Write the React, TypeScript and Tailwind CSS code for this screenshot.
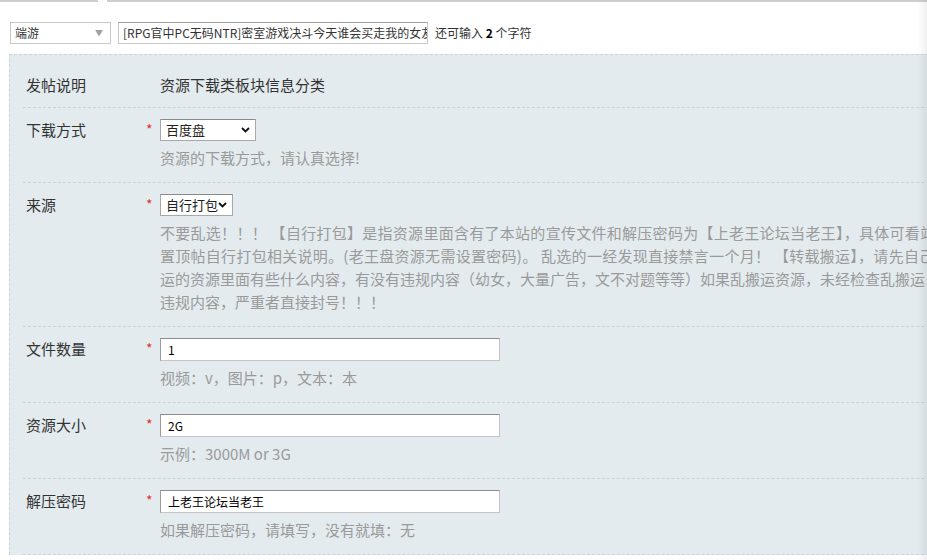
import React from "react";

const FONT = { fontFamily: '"Microsoft YaHei", "Noto Sans CJK SC", "Noto Sans", sans-serif' };

function Chevron() {
  return (
    <svg width="9" height="6" viewBox="0 0 9 6" className="shrink-0">
      <path d="M1 1 L4.5 4.5 L8 1" fill="none" stroke="#111" strokeWidth="1.8" />
    </svg>
  );
}

function FakeSelect({ value, width }: { value: string; width: string }) {
  return (
    <div
      className={`${width} h-[22px] bg-white border border-[#a8a8a8] border-t-[#8a8a8a] flex items-center justify-between pl-[5px] pr-[5px] text-[13px] text-[#222]`}
    >
      <span>{value}</span>
      <Chevron />
    </div>
  );
}

function TextInput({ value }: { value: string }) {
  return (
    <div className="w-[340px] h-[23px] bg-white border border-[#c4c4c4] border-t-[#8c8c8c] border-l-[#9a9a9a] flex items-center pl-[7px] text-[12px] text-black">
      {value}
    </div>
  );
}

function Row({
  label,
  children,
  hint,
  required = true,
}: {
  label: string;
  children: React.ReactNode;
  hint?: React.ReactNode;
  required?: boolean;
}) {
  return (
    <div className="flex border-b border-dashed border-[#c9d3d8] pt-[11px] pb-[13px]">
      <div className="w-[123px] pl-[3px] h-[22px] leading-[22px] text-[15px] text-[#333] shrink-0">
        {label}
      </div>
      <div className="w-[14px] shrink-0 h-[22px] leading-[20px] text-[14px] text-[#e0322b]">
        {required ? "*" : ""}
      </div>
      <div className="flex-1 min-w-0">
        {children}
        {hint && (
          <div className="mt-[5px] text-[15px] leading-[23px] text-[#9a9a9a] whitespace-nowrap">
            {hint}
          </div>
        )}
      </div>
    </div>
  );
}

export default function App() {
  return (
    <div className="relative w-[927px] h-[560px] overflow-hidden bg-white" style={FONT}>
      {/* top rule */}
      <div className="flex h-[2px]">
        <div className="w-[98px] bg-[#cfcfcf]" />
        <div className="w-[9px]" />
        <div className="flex-1 bg-[#cfcfcf]" />
      </div>

      {/* title bar */}
      <div className="flex items-center pl-[10px] pt-[20px] pb-[10px] text-[12px] text-[#333]">
        <div className="w-[101px] h-[22px] border border-[#c8c8c8] flex items-center justify-between pl-[4px] pr-[7px]">
          <span>端游</span>
          <span className="text-[8px] text-[#a0a0a0]">▼</span>
        </div>
        <div className="ml-[7px] w-[310px] h-[22px] border border-[#c8c8c8] border-t-[#a0a0a0] flex items-center pl-[4px] overflow-hidden whitespace-nowrap">
          [RPG官中PC无码NTR]密室游戏决斗今天谁会买走我的女友
        </div>
        <div className="ml-[7px]">
          还可输入 <b className="text-black">2</b> 个字符
        </div>
      </div>

      {/* form panel */}
      <div className="ml-[9px] w-[1000px] bg-[#e3ebef] border-t border-l border-dashed border-[#c9d3d8] pt-[7px] pl-[13px]">
        <div className="flex border-b border-dashed border-[#c9d3d8] pt-[11px] pb-[11px] text-[15px] leading-[23px] text-[#333]">
          <div className="w-[137px] pl-[3px] shrink-0">发帖说明</div>
          <div>资源下载类板块信息分类</div>
        </div>

        <Row label="下载方式" hint="资源的下载方式，请认真选择!">
          <FakeSelect value="百度盘" width="w-[96px]" />
        </Row>

        <Row
          label="来源"
          hint={
            <>
              <div className="tracking-[0.28px]">不要乱选！！！ 【自行打包】是指资源里面含有了本站的宣传文件和解压密码为【上老王论坛当老王】，具体可看站</div>
              <div className="tracking-[0.28px]">置顶帖自行打包相关说明。(老王盘资源无需设置密码)。 乱选的一经发现直接禁言一个月！ 【转载搬运】，请先自己</div>
              <div>运的资源里面有些什么内容，有没有违规内容（幼女，大量广告，文不对题等等）如果乱搬运资源，未经检查乱搬运</div>
              <div>违规内容，严重者直接封号！！！</div>
            </>
          }
        >
          <FakeSelect value="自行打包" width="w-[73px]" />
        </Row>

        <Row label="文件数量" hint="视频：v，图片：p，文本：本">
          <TextInput value="1" />
        </Row>

        <Row label="资源大小" hint="示例：3000M or 3G">
          <TextInput value="2G" />
        </Row>

        <Row label="解压密码" hint="如果解压密码，请填写，没有就填：无">
          <TextInput value="上老王论坛当老王" />
        </Row>
      </div>

      {/* right edge shade */}
      <div className="absolute top-0 right-0 w-[10px] h-full bg-gradient-to-r from-transparent to-black/[0.06] pointer-events-none" />
    </div>
  );
}
